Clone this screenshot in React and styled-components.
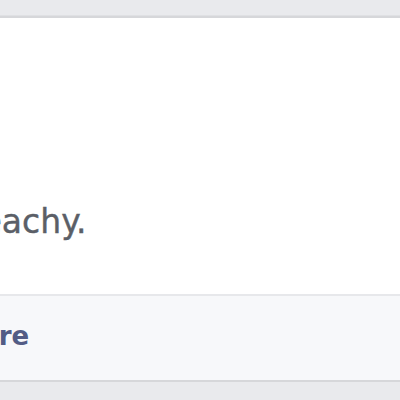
import styled, { createGlobalStyle } from 'styled-components';

const GlobalStyle = createGlobalStyle`
  html, body {
    margin: 0;
    padding: 0;
    background: #e9eaed;
    overflow: hidden;
  }
`;

const Page = styled.div`
  width: 400px;
  height: 400px;
  padding-top: 16px;
  box-sizing: border-box;
  overflow: hidden;
`;

const Card = styled.div`
  margin-left: -200px;
  width: 640px;
  background: #ffffff;
  border-top: 2px solid #d6d7da;
  border-bottom: 2px solid #d6d7da;
  box-shadow: 0 -1px 0 #dfe0e3;
  font-family: "DejaVu Sans", "Liberation Sans", sans-serif;
`;

const Body = styled.div`
  padding: 182px 0 0 29px;
  height: 276px;
  box-sizing: border-box;
`;

const Text = styled.p`
  margin: 0;
  font-size: 33px;
  line-height: 44px;
  color: #5b5f67;
  -webkit-text-stroke: 0.4px #5b5f67;
  white-space: nowrap;
`;

const Footer = styled.div`
  display: flex;
  align-items: center;
  height: 86px;
  box-sizing: border-box;
  padding: 0 0 4px 144px;
  background: #f7f8fa;
  border-top: 2px solid #e7e8eb;
`;

const Action = styled.span`
  font-size: 26px;
  font-weight: bold;
  color: #525c85;
`;

export default function App() {
  return (
    <Page>
      <GlobalStyle />
      <Card>
        <Body>
          <Text>Sounds peachy.</Text>
        </Body>
        <Footer>
          <Action>Share</Action>
        </Footer>
      </Card>
    </Page>
  );
}
